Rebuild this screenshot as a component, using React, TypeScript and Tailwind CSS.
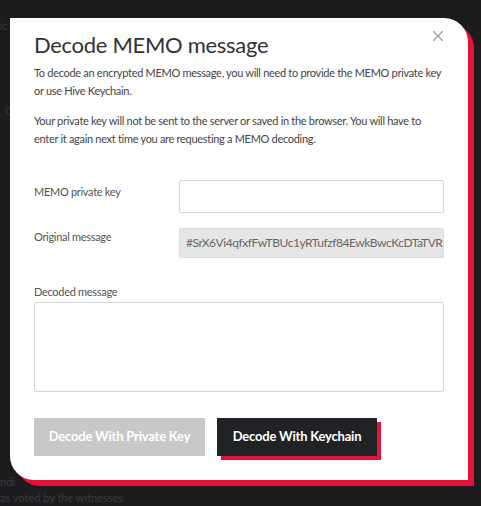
import React from "react";
import { X } from "lucide-react";

export default function App() {
  return (
    <div
      className="relative w-[481px] h-[506px] overflow-hidden bg-[#1c1c1e]"
      style={{ fontFamily: "Lato, 'Noto Sans', sans-serif" }}
    >
      {/* dimmed page behind the dialog */}
      <div className="absolute inset-0 flex flex-col justify-between pt-[18px] text-[11px] text-[#3a3a3d] pointer-events-none">
        <div className="flex flex-col gap-[68px]">
          <span>ic</span>
          <span>. 0</span>
        </div>
        <div className="flex flex-col leading-[16px]">
          <span>ndi</span>
          <span>as voted by the witnesses</span>
        </div>
      </div>

      {/* dialog */}
      <div className="relative pl-[10px] pt-[18px]">
        <div className="relative w-[458px] h-[462px] bg-white rounded-tr-[24px] rounded-bl-[24px] shadow-[6px_6px_0_#e31337] px-[24px] pt-[14px] flex flex-col tracking-[-0.3px]">
          <button className="absolute right-[21px] top-[9px] text-[#9a9a9a]">
            <X size={18} strokeWidth={1.5} />
          </button>

          <h2 className="text-[22px] leading-[26px] text-[#333] font-normal">Decode MEMO message</h2>
          <p className="mt-[6px] text-[11px] leading-[18px] text-[#444]">
            To decode an encrypted MEMO message, you will need to provide the MEMO private key or use Hive Keychain.
          </p>
          <p className="mt-[12px] text-[11px] leading-[18px] text-[#444]">
            Your private key will not be sent to the server or saved in the browser. You will have to enter it again next time you are requesting a MEMO decoding.
          </p>

          <div className="mt-[32px] flex flex-col gap-[15px]">
            <div className="flex items-start">
              <label className="w-[145px] pt-[3px] text-[11px] leading-[18px] text-[#555]">MEMO private key</label>
              <input className="flex-1 h-[33px] border border-[#d6d6d6] rounded-[2px] bg-white outline-none" />
            </div>
            <div className="flex items-start">
              <label className="w-[145px] text-[11px] leading-[18px] text-[#555]">Original message</label>
              <div className="flex-1 h-[30px] border border-[#dcdcdc] rounded-[2px] bg-[#e6e6e6] pl-[6px] flex items-center overflow-hidden whitespace-nowrap text-[12px] leading-[18px] tracking-[-0.45px] text-[#666]">
                #SrX6Vi4qfxfFwTBUc1yRTufzf84EwkBwcKcDTaTVR
              </div>
            </div>
          </div>

          <label className="mt-[25px] text-[11px] leading-[18px] text-[#555]">Decoded message</label>
          <textarea className="mt-[1px] h-[90px] border border-[#d6d6d6] rounded-[2px] resize-none outline-none" />

          <div className="mt-[26px] flex gap-[12px] tracking-[-0.2px]">
            <button className="w-[171px] h-[38px] bg-[#c8c8c8] text-white text-[13px] font-bold">Decode With Private Key</button>
            <button className="w-[160px] h-[38px] bg-[#212226] text-white text-[13px] font-bold shadow-[4px_4px_0_#e31337]">Decode With Keychain</button>
          </div>
        </div>
      </div>
    </div>
  );
}
